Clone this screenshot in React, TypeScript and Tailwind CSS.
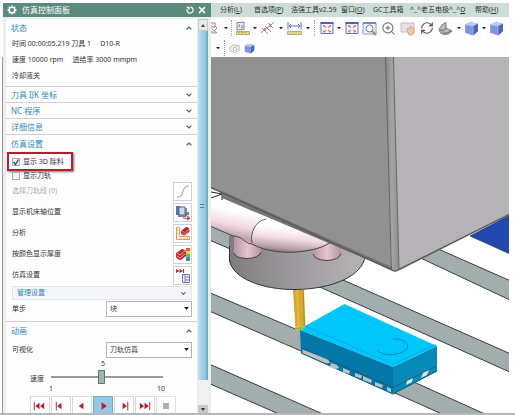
import { useState, type ReactNode } from 'react';
import { ChevronDown, ChevronUp, RefreshCw, X, ZoomIn } from 'lucide-react';

const menus = [
  { label: '分析', hotkey: 'L', width: 'w-[34px]' },
  { label: '首选项', hotkey: 'P', width: 'w-[37px]' },
  { label: '浩强工具v2.59', hotkey: '', width: 'w-[50px]' },
  { label: '窗口', hotkey: 'O', width: 'w-8' },
  { label: 'GC工具箱', hotkey: '', width: 'w-[37px]' },
];

const Dot = () => (
  <svg viewBox="0 0 4 4" className="size-1 shrink-0">
    <path d="M.5 1h3v1L2 3 .5 2z" fill="#222" />
  </svg>
);

const Divider = () => <span className="h-4 shrink-0 border-l border-dotted border-gray-400" />;

const Tool = ({ label, children }: { label: string; children: ReactNode }) => (
  <button aria-label={label} className="flex size-[15px] shrink-0 items-center justify-center">
    {children}
  </button>
);

const Cube = () => (
  <svg viewBox="0 0 14 14" className="size-full">
    <path d="M1 3.5 6 1l7 1.5v7L8.5 13.5 1 11z" fill="#7f94e0" />
    <path d="M1 3.5 6 1l7 1.5L8.5 5z" fill="#bccafb" />
    <path d="M8.5 5 13 2.500v7l-4.500 4z" fill="#4f64b8" />
    <path d="M1 3.500 8.500 5v8.500" fill="none" stroke="#a8b6f0" strokeWidth=".6" />
  </svg>
);

const FitWindow = () => (
  <svg viewBox="0 0 14 14" className="size-3.5">
    <path d="M1 1.500h12v11H1z" fill="#f5f6ff" stroke="#6272b4" />
    <path d="M.5 1h13v2H.5z" fill="#4d62b6" />
    <path d="m4 5 2 2m4-2L8 7m-4 4 2-2m4 2L8 9" stroke="#d09a66" strokeWidth="1.200" />
    <path d="M3.500 6V4.500H5m4 0h1.500V6M3.500 9.500V11H5m4 0h1.500V9.500" fill="none" stroke="#9a7468" strokeWidth=".8" />
  </svg>
);

const Toolbar = () => (
  <div className="h-10 shrink-0 bg-[#fdfdfd]">
    <div className="flex h-[22px] items-center">
      <svg viewBox="0 0 8 14" className="h-3.5 w-2 shrink-0">
        <path d="M0 2h4v4H0m1 2 5 4M4 5l2 2-3 3" fill="none" stroke="#b0767c" />
        <path d="M1 10v2h4" fill="none" stroke="#888" />
      </svg>
      <div className="ml-[5px] flex items-center gap-[3px]">
        <Dot />
        <Divider />
        <Tool label="测量体">
          <svg viewBox="0 0 15 15" className="size-full">
            <path d="M2 1.500h3l4-.5v7.500L2 9z" fill="#edf0fa" stroke="#7b86a0" />
            <path d="M4 6.500V4h1m2 0v3H6" fill="none" stroke="#6d7ea8" />
            <path d="M1.500 10.500h13v3h-13z" fill="#e3d38f" stroke="#bfae6a" />
            <path d="M4 11v1m3-1v1m3-1v1" stroke="#8a793c" />
          </svg>
        </Tool>
        <Dot />
      </div>
      <div className="ml-[3px] flex items-center gap-1">
        <Tool label="测量距离">
          <svg viewBox="0 0 15 15" className="size-full">
            <path d="m2 7 6 6M5 5l6 6M8 2l5 5" fill="none" stroke="#8a8fa8" />
            <path d="m1 12 3-3m7-5 3-3" stroke="#8a8fa8" />
            <path d="m4 9 7-5M5 7l-1 2 2 1m3-7 2 1-1 2" fill="none" stroke="#b3676b" />
          </svg>
        </Tool>
        <Dot />
        <Tool label="简单距离">
          <svg viewBox="0 0 15 15" className="size-full">
            <path d="M1 1v7.500m13-7.500v7.500M2 5h11M4 3 2 5l2 2m7-4 2 2-2 2" fill="none" stroke="#6472b4" />
            <path d="M.5 10.500h14v3H.5z" fill="#e3d38f" stroke="#bfae6a" />
          </svg>
        </Tool>
        <Dot />
        <Divider />
      </div>
      <div className="ml-1 flex items-center gap-[3px]">
        <Tool label="适合窗口"><FitWindow /></Tool>
        <Dot />
        <Tool label="适合选择"><FitWindow /></Tool>
      </div>
      <div className="ml-[3px] flex items-center gap-1">
        <Tool label="缩放窗口">
          <svg viewBox="0 0 15 15" className="size-full">
            <path d="M1 2h13v11H1z" fill="#f4f5fd" stroke="#8a98ca" />
            <path d="M1 1h13v2H1z" fill="#7284c6" />
            <path d="m10 10 4 4" stroke="#bd8055" strokeWidth="2" />
            <circle cx="7.500" cy="7.500" r="3.500" fill="#fff" stroke="#6d789b" />
          </svg>
        </Tool>
        <Tool label="缩放"><ZoomIn className="size-[15px]" color="#777" strokeWidth={1.8} /></Tool>
        <Tool label="平移">
          <svg viewBox="0 0 15 15" className="size-full">
            <path d="M1 2h13v9H1z" fill="#e3e1e8" stroke="#c4bcc4" />
            <path d="m7 9 1-2 2 1V5l2 1 2 2v4l-2 2H9z" fill="#f1c9a0" stroke="#dba880" />
          </svg>
        </Tool>
        <Tool label="旋转"><RefreshCw className="size-3.5" color="#555" strokeWidth={2} /></Tool>
        <Tool label="透视">
          <svg viewBox="0 0 15 15" className="size-full">
            <path d="M1 9Q3 3 8 1.500V7l6 3q-3 4-8 3.500Q2 13 1 9z" fill="#b9bbb2" stroke="#7d7f76" />
            <path d="M2 9q4 2 6-2M5 12q4 1 8-2" fill="none" stroke="#686a62" />
          </svg>
        </Tool>
      </div>
      <div className="ml-1 flex items-center gap-[3px]">
        <Dot />
        <Tool label="着色"><Cube /></Tool>
        <Dot />
        <Tool label="带边着色"><Cube /></Tool>
      </div>
    </div>
    <div className="flex h-[18px] items-center gap-1 pl-[5px]">
      <Dot />
      <Divider />
      <button aria-label="隐藏体" className="size-[11px]">
        <svg viewBox="0 0 12 12" className="size-full">
          <path d="M1 5 5 2l6 1v5l-4 3-6-3z" fill="#f2f2f2" stroke="#b5b5b5" />
          <circle cx="6.500" cy="6.500" r="2" fill="#fff" stroke="#b5b5b5" />
        </svg>
      </button>
      <button aria-label="显示体" className="size-[11px]"><Cube /></button>
    </div>
  </div>
);

// Model space is drawn in window coordinates, anchored to the upper left corner.
const Viewport = () => (
  <svg
    viewBox="211 57 298 356"
    preserveAspectRatio="xMinYMin slice"
    className="min-h-0 w-full flex-1 bg-white"
    role="img"
    aria-label="机床仿真"
  >
    <defs>
      <linearGradient id="pipe" x1=".6" y1="0" x2=".35" y2="1">
        <stop offset=".3" stopColor="#fff" />
        <stop offset=".6" stopColor="#f1dbe2" />
        <stop offset=".88" stopColor="#b79ba3" />
        <stop offset="1" stopColor="#7d6970" />
      </linearGradient>
      <linearGradient id="stub">
        <stop offset="0" stopColor="#b895a0" />
        <stop offset=".5" stopColor="#e3c5ce" />
        <stop offset="1" stopColor="#b594a0" />
      </linearGradient>
      <linearGradient id="disc">
        <stop offset="0" stopColor="#7e7c7e" />
        <stop offset=".5" stopColor="#9d9b9d" />
        <stop offset="1" stopColor="#b5b3b5" />
      </linearGradient>
      <linearGradient id="edge">
        <stop offset="0" stopColor="#858385" />
        <stop offset=".5" stopColor="#a5a3a5" />
        <stop offset="1" stopColor="#8f8d8f" />
      </linearGradient>
    </defs>

    {/* Table rails */}
    <g fill="#a1adae" stroke="#393d3f" strokeWidth="1">
      <path d="M420 241 512 281.500V301L412 254z" />
      <path d="M208 221 343 280 512 354.500V373L322 288 208 239.500z" />
      <path d="M208 292 299 330.500 415 382.500 486 414.500H443L301 351 208 310.500z" />
      <path d="M208 363.500 324 414.500H280L208 383z" />
    </g>
    <path d="m470 236 40-21v39z" fill="#2149ad" stroke="#24345c" strokeWidth=".7" />

    {/* Spindle nose */}
    <path d="M229 236V260C232 278 262 290 296 289.500C332 289 363 276 365 256L330 225z" fill="url(#disc)" />
    <path d="M229.500 246V260C232 278 262 290 296 289.500C332 289 363 276 365 256" fill="none" stroke="#333" />
    <path d="M234 233v20q1 5 13 5.500 12-.5 14-6V235z" fill="url(#stub)" />
    <path d="M234 253q1 5 13 5.500 12-.5 14-6" fill="none" stroke="#4e3d43" />
    <path d="M313 238v16q2 6 14 6.500 12-.5 14-7V235z" fill="url(#stub)" />
    <path d="M313 254q2 6 14 6.500 12-.5 14-7" fill="none" stroke="#4e3d43" />
    <path d="M210 198 265 217 256 243 246 241 237 236 210 227z" fill="url(#pipe)" />
    <path d="M264 218C254 222 250 234 252 243C266 252 288 254 305 251C318 249 326 246 332 241L290 221z" fill="url(#pipe)" />
    <path d="M266 219C255 221 250 233 252 243" fill="none" stroke="#44373b" strokeWidth=".8" />
    <path d="M210 226 233 236C243 236 243 243 252 244C266 252 288 254 305 251C318 249 326 246 332 241" fill="none" stroke="#514348" strokeWidth="1" />
    <path d="m211 198 11-4v6m-11-8 11 2" fill="none" stroke="#222" />

    {/* Spindle head */}
    <path d="M210 57H386L392 270 210 188z" fill="#929192" />
    <path d="M222 191 392 267v3L222 198z" fill="#777577" />
    <path d="M394 57H510V214L399 270z" fill="#b5b3b5" />
    <path d="M385 57h9l5 212-3 2h-4z" fill="url(#edge)" />
    <path d="m385.500 57 6 213M393.500 57l5.500 212" fill="none" stroke="#5b595b" strokeWidth=".8" />
    <path d="m210 187 181 82.500q4 3 8 0L510 214" fill="none" stroke="#5a595c" strokeWidth="1.500" />

    {/* Cutter */}
    <path d="M293 290h11l1.500 38q-5 4-10 1z" fill="#d4aa2e" />
    <path d="m297 290 2 38" stroke="#e0b93f" strokeWidth="2" />
    <path d="m303 290 1.500 38" stroke="#a88c2b" />
    <ellipse cx="300.500" cy="328.500" rx="5" ry="2" fill="#b7a934" stroke="#d8d832" />

    {/* Workpiece */}
    <path d="m300 330 5-4 39.500-22L437 346l-44 21z" fill="#00c6fb" />
    <path d="m300 330 93 37v27l-92-41z" fill="#0377a8" />
    <path d="m393 367 44-21v25l-44 23z" fill="#0789ba" />
    <path d="m305 326 88.500 38L436 344.500" fill="none" stroke="#00a3d5" strokeWidth=".7" />
    <path d="m302 348.500 91 39 43-21" fill="none" stroke="#1d4f66" strokeWidth=".7" />
    <path d="m301 353 92 41 44-23" fill="none" stroke="#075c78" />
    <path d="M393 339C404 338 411 345 406 350S383 357 377 350" fill="none" stroke="#087eaa" strokeWidth=".8" />
    <g fill="#bfc1bf">
      <path d="m302.500 349.500 18 7 7 3 3 3-4 1-24-10.500z" />
      <path d="m331 363 6 2 2 3-4 1-5-2zM343 368l7 3-1 3-6-2zM355 373l7 2.500-1 3-6-2zM363 376l9 4-1 3-8-3zM375 382l8 3-1 3-7-2.500zM387 387l4 1.500v4l-4-2z" />
    </g>
    <g fill="#e3e5e3">
      <path d="m407 381 6-3-1 4-6 3zM423 373l6-3-2 5-6 3z" />
    </g>
    <path d="m300.500 329 4.500-4 .5 2-4 4z" fill="#56dc71" />
  </svg>
);

type SectionProps = { title: string; open?: boolean; children?: ReactNode };

const Section = ({ title, open = false, children }: SectionProps) => (
  <section className="border-b border-[#d5cdd3]">
    <button
      aria-expanded={open}
      className={`flex w-full items-center justify-between pr-1 pl-[5px] text-[8px] leading-[15px] text-[#3288b5] ${open ? 'h-[17px]' : 'h-[15px]'}`}
    >
      {title}
      {open
        ? <ChevronUp className="size-2" color="#426b78" strokeWidth={3.5} />
        : <ChevronDown className="size-2" color="#426b78" strokeWidth={3.5} />}
    </button>
    {children}
  </section>
);

const CheckRow = ({ id, label, checked, onChange }: { id: string; label: string; checked: boolean; onChange: () => void }) => (
  <div className="flex items-center gap-[3px]">
    <span className="relative size-2">
      <input
        id={id}
        type="checkbox"
        checked={checked}
        onChange={onChange}
        className="block size-2 appearance-none border border-[#a5abb1] bg-[#f0f3f5]"
      />
      {checked && (
        <svg viewBox="0 0 8 8" className="pointer-events-none absolute inset-0 size-2">
          <path d="m1.500 4 2 2.500L6.500 1.500" fill="none" stroke="#294a83" strokeWidth="1.300" />
        </svg>
      )}
    </span>
    <label htmlFor={id} className="leading-[10px]">{label}</label>
  </div>
);

const SelectRow = ({ id, label, options }: { id: string; label: string; options: string[] }) => (
  <div className="flex h-4 items-center justify-between pr-[5px] pl-1.5">
    <label htmlFor={id}>{label}</label>
    <div className="relative h-4 w-[86px]">
      <select id={id} className="block size-full appearance-none border border-[#b5b3b8] bg-white px-[3px] text-[7px]">
        {options.map((option) => <option key={option}>{option}</option>)}
      </select>
      <svg viewBox="0 0 6 4" className="pointer-events-none absolute top-1.5 right-[3px] h-[3px] w-[5px]">
        <path d="M0 0h6L3 4z" fill="#111" />
      </svg>
    </div>
  </div>
);

const settingRows = [
  {
    label: '选择刀轨段 (0)',
    disabled: true,
    icon: <path d="M3 14C8 14 8 11 9 8S12 3 15 3" fill="none" stroke="#aaa" strokeWidth="1.200" />,
  },
  {
    label: '显示机床轴位置',
    disabled: false,
    icon: (
      <>
        <path d="M2 2h5v9H2z" fill="#5276a8" />
        <path d="M5 3h6v8H5z" fill="#c9dcec" stroke="#566b88" />
        <path d="M4 11h8v2H4z" fill="#74828c" />
        <path d="M12 4v8" stroke="#55708c" strokeWidth="1.500" />
        <path d="m9 14 6 .5M13 12l2.500 2.500L13 16" fill="none" stroke="#ac4046" strokeWidth="1.200" />
        <path d="M11 8h4v3h-4z" fill="#627e9a" />
      </>
    ),
  },
  {
    label: '分析',
    disabled: false,
    icon: (
      <>
        <path d="M2.500 2.500h3v9h10v3h-13z" fill="#fdf0da" stroke="#d99b55" />
        <path d="M2.500 5H4m-1.500 3H4m3 6.500V13m3 1.500V13m3 1.500V13" stroke="#d99b55" strokeWidth=".7" />
        <path d="m7 6 5-4q3 0 3.500 3v2l-5 3.500Q7 10 7 8z" fill="#be232d" />
        <path d="m8 6 2.500 1.500L15 4.500M8 8.500l2.500 1 5-3" fill="none" stroke="#eaa09f" strokeWidth=".8" />
      </>
    ),
  },
  {
    label: '按颜色显示厚度',
    disabled: false,
    icon: (
      <>
        <path d="m2 7 6-4q3 0 4 3v4l-5 4q-4-.5-5-3z" fill="#c12831" />
        <path d="m3 7 3 2 5-4m-8 5 3 2 5-4" fill="none" stroke="#efb1ae" strokeWidth=".9" />
        <path d="M12 2h4v4h-4z" fill="#e0603a" />
        <path d="M12 5h4v3h-4z" fill="#f0d83a" />
        <path d="M12 8h4v3h-4z" fill="#57c66b" />
        <path d="M12 11h4v4h-4z" fill="#3c8bd0" />
      </>
    ),
  },
  {
    label: '仿真设置',
    disabled: false,
    icon: (
      <>
        <path d="m2 2 3.500 2L2 6zm3.500 0L9 4 5.500 6zM9 2h1v4H9z" fill="#b32435" />
        <path d="M8.500 7.500h7v8h-7z" fill="#eeeefc" stroke="#7277ad" />
        <path d="M11 8v7m0-5h4m-4 3h4" stroke="#7a80bb" />
      </>
    ),
  },
];

const playback = [
  { label: '回到开头', d: 'M3 5h1v9H3zM9 6v7L4.500 9.500zM14 6v7L9.500 9.500z' },
  { label: '上一操作', d: 'M4 5h1v9H4zM10 6v7L5.500 9.500z' },
  { label: '后退', d: 'M11 6v7L6 9.500z' },
  { label: '播放', d: 'M8 5.500v8l5.500-4z' },
  { label: '下一操作', d: 'M8 6v7l4.500-3.500zM13 5h1v9h-1z' },
  { label: '到结尾', d: 'M4 6v7l4.500-3.500zM9 6v7l4.500-3.500zM14 5h1v9h-1z' },
];

const Panel = () => {
  const [showRemoval, setShowRemoval] = useState(true);
  const [showPath, setShowPath] = useState(false);
  const [speed, setSpeed] = useState(5);

  return (
    <aside className="flex w-[208px] shrink-0 flex-col overflow-hidden bg-[#eceeee]">
      <header className="flex h-3.5 shrink-0 items-center bg-[#5c8b7d] px-1 text-[8px] text-white">
        <svg viewBox="0 0 10 10" className="size-2.5">
          <circle cx="5" cy="5" r="2.800" fill="none" stroke="#fff" strokeWidth="1.500" />
          <path d="M5 .5v1.500m0 6v1.500M.5 5H2m6 0h1.500M1.800 1.800l1 1m4.400 4.400 1 1m0-6.400-1 1M2.800 7.200l-1 1" stroke="#fff" strokeWidth="1.300" />
        </svg>
        <h1 className="ml-[5px] flex-1 leading-[14px]">仿真控制面板</h1>
        <button aria-label="重置">
          <svg viewBox="0 0 10 10" className="size-2">
            <path d="M6 1.500A3.800 3.800 0 1 1 1.500 4" fill="none" stroke="#fff" strokeWidth="1.500" />
            <path d="M0 1h4.500v4z" fill="#fff" />
          </svg>
        </button>
        <button aria-label="关闭" className="ml-[3px]"><X className="size-2.5" strokeWidth={4} /></button>
      </header>

      <div className="flex min-h-0 flex-1 pt-0.5 pl-[3px]">
        <div className="min-w-0 flex-1 overflow-hidden bg-[#fdfdfd]">
          <Section title="状态" open>
            <div className="pb-0.5 pl-1.5 leading-4 whitespace-pre">
              <p>时间 00:00:05.219 刀具 1     D10-R</p>
              <p>速度 10000 rpm     进给率 3000 mmpm</p>
              <p>冷却液关</p>
            </div>
          </Section>
          <Section title="刀具 IJK 坐标" />
          <Section title="NC 程序" />
          <Section title="详细信息" />

          <Section title="仿真设置" open>
            <div className="ml-px flex h-[19px] w-[66px] items-center border-2 border-[#b51f29] pl-[3px] shadow-[1px_1px_2px_#777]">
              <CheckRow id="removal" label="显示 3D 除料" checked={showRemoval} onChange={() => setShowRemoval(!showRemoval)} />
            </div>
            <div className="pl-1.5">
              <CheckRow id="path" label="显示刀轨" checked={showPath} onChange={() => setShowPath(!showPath)} />
            </div>
            <ul className="flex flex-col gap-0.5 py-px pr-[5px] pl-1.5">
              {settingRows.map((row) => (
                <li key={row.label} className="flex items-center justify-between">
                  <span className={row.disabled ? 'text-[#aaa]' : ''}>{row.label}</span>
                  <button aria-label={row.label} disabled={row.disabled} className="size-[19px] border border-[#d3cfd5] bg-white">
                    <svg viewBox="0 0 17 17" className="size-full">{row.icon}</svg>
                  </button>
                </li>
              ))}
            </ul>
            <button className="ml-1.5 flex h-3.5 w-[180px] items-center justify-between border border-[#e2e5e9] bg-[#f4f7fa] px-1 text-[#3288b5]">
              管理设置
              <ChevronDown className="size-[7px]" color="#426b78" strokeWidth={3.5} />
            </button>
            <div className="pt-px pb-1">
              <SelectRow id="step" label="单步" options={['块', '运动', '操作']} />
            </div>
          </Section>

          <Section title="动画" open>
            <div className="pt-[3px]">
              <SelectRow id="visual" label="可视化" options={['刀轨仿真', '机床仿真']} />
            </div>
            <div className="flex items-start pl-6">
              <label htmlFor="speed" className="mt-4 w-[21px] leading-[10px]">速度</label>
              <div className="w-28">
                <div className="px-[3px] leading-3">
                  <output
                    htmlFor="speed"
                    className="block w-0 whitespace-nowrap"
                    style={{ marginLeft: `${((speed - 1) / 9) * 100}%` }}
                  >
                    {speed}
                  </output>
                </div>
                <input
                  id="speed"
                  type="range"
                  min={1}
                  max={10}
                  value={speed}
                  onChange={(e) => setSpeed(Number(e.target.value))}
                  className="block h-3.5 w-full appearance-none bg-transparent [&::-webkit-slider-runnable-track]:h-0.5 [&::-webkit-slider-runnable-track]:bg-[#999] [&::-webkit-slider-thumb]:-mt-1.5 [&::-webkit-slider-thumb]:h-3.5 [&::-webkit-slider-thumb]:w-[7px] [&::-webkit-slider-thumb]:appearance-none [&::-webkit-slider-thumb]:border [&::-webkit-slider-thumb]:border-[#64736d] [&::-webkit-slider-thumb]:bg-[#9fb7ac]"
                />
                <div className="-mx-1 flex justify-between px-0.5 leading-[10px]">
                  <span>1</span>
                  <span>10</span>
                </div>
              </div>
            </div>
            <div className="flex gap-px pt-0.5 pl-6">
              {playback.map((button) => (
                <button
                  key={button.label}
                  aria-label={button.label}
                  className={`size-5 border ${button.label === '播放' ? 'border-[#76a8c8] bg-[#95c7e4]' : 'border-[#ddd5da] bg-white'}`}
                >
                  <svg viewBox="0 0 19 19" className="size-full"><path d={button.d} fill="#b51e2b" /></svg>
                </button>
              ))}
              <button aria-label="停止" disabled className="flex size-5 items-center justify-center border border-[#e6e0e4] bg-white">
                <span className="size-1.5 bg-[#bda9b5]" />
              </button>
            </div>
          </Section>
        </div>

        {/* Scroll bar */}
        <div className="mr-[3px] ml-px flex w-2.5 shrink-0 flex-col bg-[#eef0f1]">
          <button aria-label="向上滚动" className="flex h-3 items-center justify-center border border-[#c8c8cc] bg-[#e9e9ec]">
            <svg viewBox="0 0 4 3" className="h-[3px] w-1"><path d="m0 3 2-3 2 3z" fill="#444" /></svg>
          </button>
          <div className="flex flex-[14] items-center justify-center border-r-2 border-[#73abc9] bg-gradient-to-r from-[#b9dff0] to-[#8fc6e2]">
            <span className="h-1 w-1 border-y border-[#517e97]" />
          </div>
          <div className="flex-1" />
          <button aria-label="向下滚动" className="flex h-2 items-center justify-center bg-[#c5c7c9]">
            <svg viewBox="0 0 4 3" className="h-[3px] w-1"><path d="M0 0h4L2 3z" fill="#333" /></svg>
          </button>
        </div>
      </div>
    </aside>
  );
};

const App = () => (
  <div
    lang="zh-CN"
    className="flex h-screen flex-col overflow-hidden bg-white pt-[3px] font-['Noto_Sans','Noto_Sans_CJK_SC',sans-serif] text-[7px] text-[#333]"
  >
    <div className="flex min-h-0 flex-1 pr-1.5">
      <div className="mt-[54px] ml-0.5 w-px shrink-0 bg-[#9a9a9a]" />
      <Panel />
      <main className="flex min-w-0 flex-1 flex-col">
        <nav className="flex h-3.5 shrink-0 items-center overflow-hidden bg-[#ccddd6] pl-[9px] leading-[14px] whitespace-nowrap">
          {menus.map((menu) => (
            <button key={menu.label} className={`shrink-0 text-left ${menu.width}`}>
              {menu.label}
              {menu.hotkey && <>(<u>{menu.hotkey}</u>)</>}
            </button>
          ))}
          <button className="w-[65px] shrink-0 text-left">^_^老五电极^_^<u>D</u></button>
          <button className="shrink-0">帮助(<u>H</u>)</button>
        </nav>
        <Toolbar />
        <Viewport />
      </main>
    </div>
    <div className="h-0.5 shrink-0 bg-[#b7b8bb]" />
  </div>
);

export default App;
